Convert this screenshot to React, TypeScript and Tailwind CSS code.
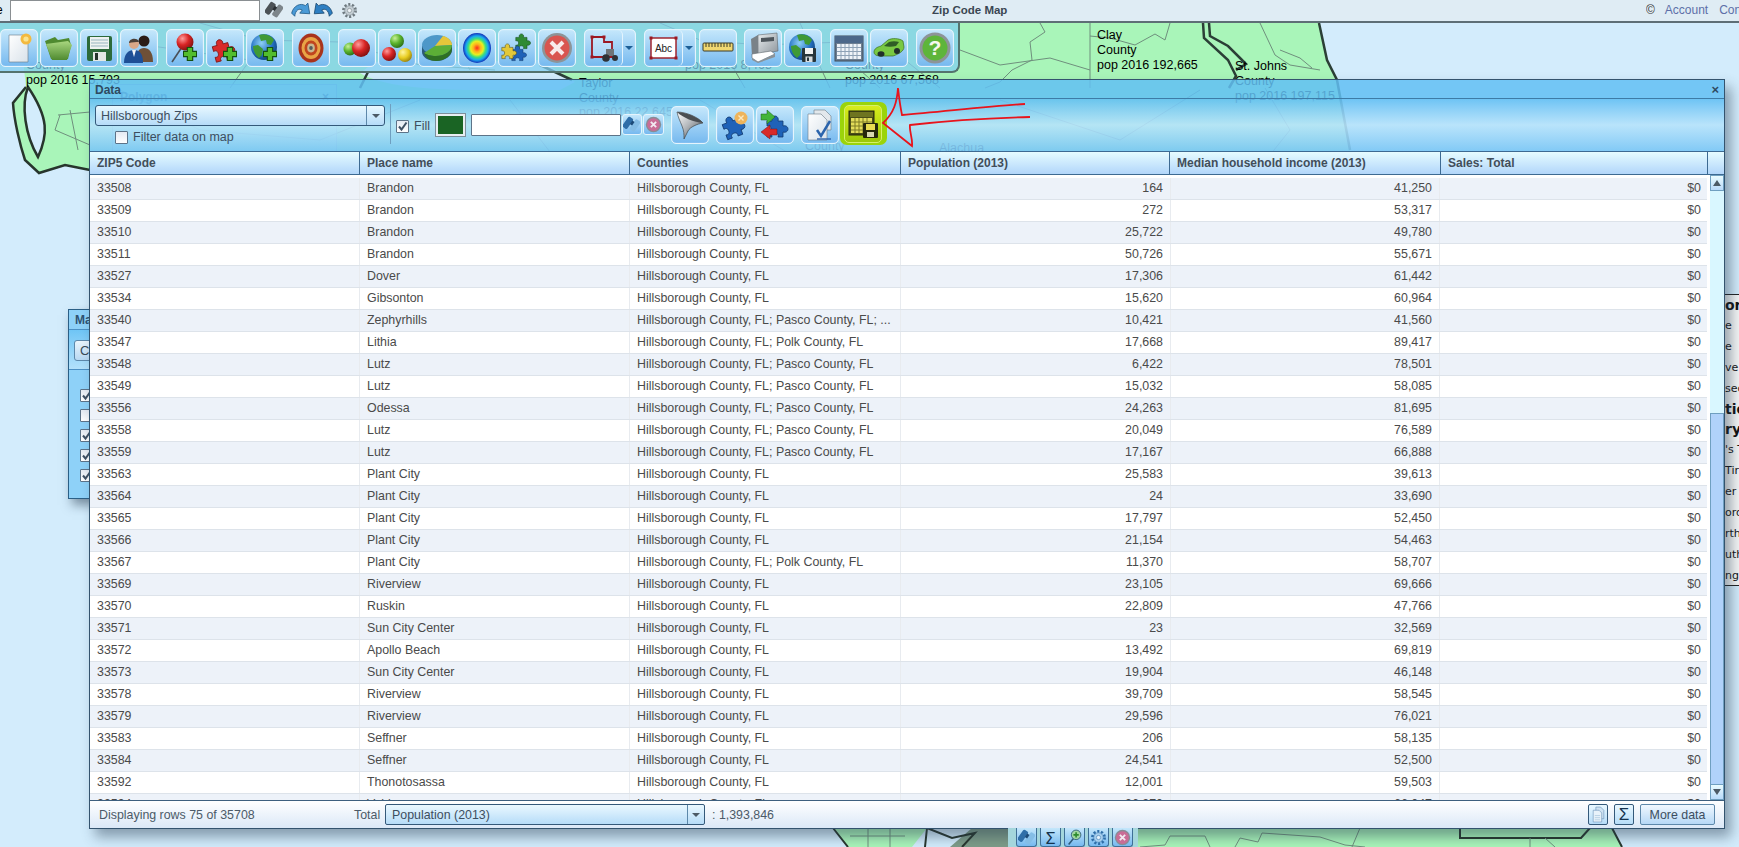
import type { ReactNode } from 'react'

type Row = [string, string, string, string, string]

const HC = 'Hillsborough County, FL'
const HCP = 'Hillsborough County, FL; Pasco County, FL'
const HCK = 'Hillsborough County, FL; Polk County, FL'

const rows: Row[] = [
  ['33508', 'Brandon', HC, '164', '41,250'],
  ['33509', 'Brandon', HC, '272', '53,317'],
  ['33510', 'Brandon', HC, '25,722', '49,780'],
  ['33511', 'Brandon', HC, '50,726', '55,671'],
  ['33527', 'Dover', HC, '17,306', '61,442'],
  ['33534', 'Gibsonton', HC, '15,620', '60,964'],
  ['33540', 'Zephyrhills', 'Hillsborough County, FL; Pasco County, FL; ...', '10,421', '41,560'],
  ['33547', 'Lithia', HCK, '17,668', '89,417'],
  ['33548', 'Lutz', HCP, '6,422', '78,501'],
  ['33549', 'Lutz', HCP, '15,032', '58,085'],
  ['33556', 'Odessa', HCP, '24,263', '81,695'],
  ['33558', 'Lutz', HCP, '20,049', '76,589'],
  ['33559', 'Lutz', HCP, '17,167', '66,888'],
  ['33563', 'Plant City', HC, '25,583', '39,613'],
  ['33564', 'Plant City', HC, '24', '33,690'],
  ['33565', 'Plant City', HC, '17,797', '52,450'],
  ['33566', 'Plant City', HC, '21,154', '54,463'],
  ['33567', 'Plant City', HCK, '11,370', '58,707'],
  ['33569', 'Riverview', HC, '23,105', '69,666'],
  ['33570', 'Ruskin', HC, '22,809', '47,766'],
  ['33571', 'Sun City Center', HC, '23', '32,569'],
  ['33572', 'Apollo Beach', HC, '13,492', '69,819'],
  ['33573', 'Sun City Center', HC, '19,904', '46,148'],
  ['33578', 'Riverview', HC, '39,709', '58,545'],
  ['33579', 'Riverview', HC, '29,596', '76,021'],
  ['33583', 'Seffner', HC, '206', '58,135'],
  ['33584', 'Seffner', HC, '24,541', '52,500'],
  ['33592', 'Thonotosassa', HC, '12,001', '59,503'],
  ['33594', 'Valrico', HC, '36,370', '66,047'],
]

const columns = ['ZIP5 Code', 'Place name', 'Counties', 'Population (2013)', 'Median household income (2013)', 'Sales: Total']
const colTemplate = 'grid grid-cols-[270px_270px_271px_270px_269px_268px]'
const headTemplate = 'grid grid-cols-[270px_270px_271px_269px_271px_267px]'

const sideLines: [string, boolean][] = [
  ['ore', true],
  ['e', false],
  ['e', false],
  ['ve', false],
  ['sec', false],
  ['tie', true],
  ['ry', true],
  ["'s T", false],
  ['Tir', false],
  ['er', false],
  ['ord', false],
  ['rth', false],
  ['uth', false],
  ['ng', false],
]

const puzzle =
  'M4 12h5c-1-3 1-5 3-5s4 2 3 5h5v5c3-1 5 1 5 3s-2 4-5 3v5h-5c1-3-1-4-3-4s-4 1-3 4H4v-5c3 1 4-1 4-3s-1-4-4-3z'

function Svg({ children, size = 32 }: { children: ReactNode; size?: number }) {
  return (
    <svg width={size} height={size} viewBox="0 0 32 32" className="block">
      {children}
    </svg>
  )
}

function Plus({ x = 21, y = 22 }: { x?: number; y?: number }) {
  return (
    <g>
      <path d={`M${x} ${y - 7}v14M${x - 7} ${y}h14`} stroke="#14500f" strokeWidth="6.5" />
      <path d={`M${x} ${y - 6}v12M${x - 6} ${y}h12`} stroke="#52bd2d" strokeWidth="4.2" />
    </g>
  )
}

function Floppy({ x, y, s = 1, fill = '#26343a' }: { x: number; y: number; s?: number; fill?: string }) {
  return (
    <g transform={`translate(${x} ${y}) scale(${s})`}>
      <rect width="14" height="14" rx="1" fill={fill} />
      <rect x="3" width="8" height="6" fill="#f2f2f2" />
      <rect x="3.5" y="8.5" width="7" height="5.5" fill="#d8dde0" />
      <rect x="5" y="9.5" width="2" height="3.5" fill="#26343a" />
    </g>
  )
}

function Defs() {
  return (
    <svg width="0" height="0" className="absolute">
      <defs>
        <radialGradient id="ballRed" cx="35%" cy="30%" r="75%">
          <stop offset="0" stopColor="#ff9c9c" />
          <stop offset="0.5" stopColor="#d92525" />
          <stop offset="1" stopColor="#7c0f0f" />
        </radialGradient>
        <radialGradient id="ballGreen" cx="35%" cy="30%" r="75%">
          <stop offset="0" stopColor="#c8f09a" />
          <stop offset="0.5" stopColor="#5cb52e" />
          <stop offset="1" stopColor="#2a6b16" />
        </radialGradient>
        <radialGradient id="ballYellow" cx="35%" cy="30%" r="75%">
          <stop offset="0" stopColor="#fff6a0" />
          <stop offset="0.55" stopColor="#e8cc20" />
          <stop offset="1" stopColor="#97800c" />
        </radialGradient>
        <radialGradient id="globe" cx="40%" cy="35%" r="70%">
          <stop offset="0" stopColor="#8ed0f5" />
          <stop offset="0.6" stopColor="#2472c4" />
          <stop offset="1" stopColor="#103e78" />
        </radialGradient>
        <radialGradient id="heat">
          <stop offset="0" stopColor="#ff2a1c" />
          <stop offset="0.25" stopColor="#ffb01c" />
          <stop offset="0.45" stopColor="#e8f020" />
          <stop offset="0.62" stopColor="#3fe07a" />
          <stop offset="0.8" stopColor="#18a8f0" />
          <stop offset="1" stopColor="#1230b8" />
        </radialGradient>
        <linearGradient id="folder" x1="0" y1="0" x2="0" y2="1">
          <stop offset="0" stopColor="#a9d77f" />
          <stop offset="1" stopColor="#4f8a30" />
        </linearGradient>
        <linearGradient id="funnel" x1="0" y1="0" x2="1" y2="1">
          <stop offset="0" stopColor="#ffffff" />
          <stop offset="0.45" stopColor="#b4b8bc" />
          <stop offset="1" stopColor="#3c4044" />
        </linearGradient>
        <linearGradient id="sheet" x1="0" y1="0" x2="1" y2="1">
          <stop offset="0" stopColor="#ffffff" />
          <stop offset="1" stopColor="#d9e2ea" />
        </linearGradient>
        <linearGradient id="printer" x1="0" y1="0" x2="1" y2="1">
          <stop offset="0" stopColor="#e8ecee" />
          <stop offset="1" stopColor="#8e969c" />
        </linearGradient>
      </defs>
    </svg>
  )
}

const Globe = () => (
  <g>
    <circle cx="15" cy="15" r="13" fill="url(#globe)" />
    <path d="M10 3c6-2 12 0 15 5l-3 5-4-1-1-4-5 1zM4 14l5-1 5 4-1 6-3 3c-4-3-6-8-6-12z" fill="#3f9a35" />
  </g>
)

const icons: Record<string, ReactNode> = {
  doc: (
    <Svg>
      <path d="M6 3h14l5 5v22H6z" fill="url(#sheet)" stroke="#6a7a86" strokeWidth=".6" />
      <circle cx="23" cy="7" r="5.5" fill="#f3b93f" />
      <circle cx="23" cy="7" r="2.6" fill="#fbe48e" />
    </Svg>
  ),
  folder: (
    <Svg>
      <path d="M2 9l10-4 3 3 11-2 2 7-3 14H8z" fill="#4f8a30" />
      <path d="M3 12l22-3 4 4-5 15H9z" fill="url(#folder)" />
    </Svg>
  ),
  save: (
    <Svg>
      <rect x="4" y="4" width="25" height="25" rx="2" fill="#2d6a3a" />
      <rect x="7" y="5" width="19" height="12" fill="#eef2f0" />
      <path d="M8 8h17M8 11h17M8 14h17" stroke="#98b5c0" />
      <rect x="10" y="20" width="13" height="9" fill="#e4e8e6" />
      <rect x="12" y="21" width="3" height="7" fill="#25332b" />
    </Svg>
  ),
  people: (
    <Svg>
      <circle cx="21" cy="9" r="5.5" fill="#2b1d18" />
      <path d="M13 30c0-10 3-14 8-14s9 4 9 14z" fill="#6e5038" />
      <circle cx="11" cy="12" r="5" fill="#d9a888" />
      <path d="M6 11c0-5 9-6 10-1-3 0-7 0-10 1z" fill="#4a4038" />
      <path d="M1 31c0-9 4-13 10-13s9 4 9 13z" fill="#1e4f96" />
      <path d="M9 18l2 7 2-7z" fill="#f0f4f8" />
    </Svg>
  ),
  pin: (
    <Svg>
      <path d="M13 15L3 30" stroke="#4a5058" strokeWidth="1.6" />
      <circle cx="16" cy="10" r="8.5" fill="url(#ballRed)" />
      <Plus />
    </Svg>
  ),
  puzzlePlus: (
    <Svg>
      <g transform="rotate(-15 14 16)">
        <path d={puzzle} fill="#d82a2a" stroke="#7c1212" strokeWidth=".8" />
      </g>
      <Plus />
    </Svg>
  ),
  globePlus: (
    <Svg>
      <Globe />
      <Plus />
    </Svg>
  ),
  target: (
    <Svg>
      <ellipse cx="16" cy="16" rx="12.5" ry="14.5" fill="#a8331c" />
      <ellipse cx="16" cy="16" rx="9.5" ry="11" fill="#e8a446" />
      <ellipse cx="16" cy="16" rx="6.5" ry="7.5" fill="#c0451e" />
      <ellipse cx="16" cy="16" rx="3.8" ry="4.4" fill="#c8b890" />
      <ellipse cx="16" cy="16" rx="1.8" ry="2" fill="#545b5e" />
    </Svg>
  ),
  bubbles: (
    <Svg>
      <circle cx="9" cy="17" r="6.5" fill="url(#ballGreen)" />
      <circle cx="20" cy="16" r="9" fill="url(#ballRed)" />
    </Svg>
  ),
  balls: (
    <Svg>
      <circle cx="16" cy="9" r="7" fill="url(#ballGreen)" />
      <circle cx="8" cy="22" r="7" fill="url(#ballRed)" />
      <circle cx="24" cy="23" r="7" fill="url(#ballYellow)" />
    </Svg>
  ),
  pie: (
    <Svg>
      <path d="M1 14v6c0 5 6 9 14 9 9 0 16-5 16-11v-4z" fill="#2b5a78" />
      <ellipse cx="16" cy="13" rx="15" ry="10" fill="#4d97c8" />
      <path d="M14 14L22 4c5 1 9 5 9 9z" fill="#e6c63a" />
      <path d="M14 14l17-1c0 6-7 11-16 11-6 0-9-1-12-3z" fill="#5cae36" />
      <path d="M3 21c3 2 6 3 12 3 9 0 16-5 16-11v4c0 6-7 12-16 12-6 0-10-3-12-8z" fill="#2e7024" />
    </Svg>
  ),
  heat: (
    <Svg>
      <ellipse cx="16" cy="16" rx="14" ry="15" fill="url(#heat)" />
    </Svg>
  ),
  puzzles: (
    <Svg>
      <g transform="translate(12 -3) scale(.7)">
        <path d={puzzle} fill="#2f8a34" stroke="#134a18" strokeWidth=".8" />
      </g>
      <g transform="translate(8 9) scale(.7)">
        <path d={puzzle} fill="#1f62b8" stroke="#123a70" strokeWidth=".8" />
      </g>
      <g transform="translate(-2 7) scale(.7)">
        <path d={puzzle} fill="#e2c83a" stroke="#5c5010" strokeWidth=".8" />
      </g>
    </Svg>
  ),
  close: (
    <Svg>
      <circle cx="16" cy="16" r="15" fill="#8d9498" />
      <circle cx="16" cy="16" r="12.5" fill="#d95550" />
      <path d="M10 10l12 12M22 10L10 22" stroke="#f8eaea" strokeWidth="4" />
    </Svg>
  ),
  polygon: (
    <Svg>
      <path d="M4 5h12v5h8v15H4z" fill="#fff" fillOpacity=".25" stroke="#9c1822" strokeWidth="1.8" />
      <g fill="#9c1822">
        <rect x="2.500" y="3.500" width="3" height="3" />
        <rect x="14.500" y="3.500" width="3" height="3" />
        <rect x="2.500" y="23.500" width="3" height="3" />
      </g>
      <rect x="18" y="17" width="8" height="7" fill="#6e7478" />
      <circle cx="18" cy="26" r="3.800" fill="#2e3236" />
      <circle cx="27" cy="26" r="3" fill="#2e3236" />
    </Svg>
  ),
  abc: (
    <svg width="32" height="32" viewBox="0 0 32 32" className="block">
      <rect x="3" y="6" width="25" height="20" fill="#fff" stroke="#9c1822" strokeWidth="1.4" />
      <g fill="#9c1822">
        <rect x="1.500" y="4.500" width="3" height="3" />
        <rect x="26.500" y="4.500" width="3" height="3" />
        <rect x="1.500" y="24.500" width="3" height="3" />
        <rect x="26.500" y="24.500" width="3" height="3" />
      </g>
      <text x="15.500" y="20" textAnchor="middle" fontSize="10" fill="#222" fontFamily="Liberation Sans, sans-serif">
        Abc
      </text>
    </svg>
  ),
  ruler: (
    <Svg>
      <rect x="1" y="11" width="30" height="8" rx="1" fill="#f1d871" stroke="#3b3a28" />
      <path d="M4 11v4M7 11v4M10 11v4M13 11v4M16 11v4M19 11v4M22 11v4M25 11v4M28 11v4" stroke="#3b3a28" />
    </Svg>
  ),
  printer: (
    <Svg>
      <path d="M11 3l19-2 1 18-20 3z" fill="url(#printer)" stroke="#5e666c" strokeWidth=".6" />
      <path d="M11 3L4 7l1 17 6-2z" fill="#7a8288" />
      <path d="M14 6l13-1v4l-13 1z" fill="#4e565c" />
      <path d="M5 22l19-3 4 3-17 8-6-4z" fill="#ffffff" stroke="#5e666c" strokeWidth=".6" />
      <path d="M5 26l6 4 17-8v3l-17 6-6-3z" fill="#8a9298" />
    </Svg>
  ),
  globeSave: (
    <Svg>
      <Globe />
      <Floppy x={15} y={16} />
    </Svg>
  ),
  calendar: (
    <Svg>
      <rect x="2" y="4" width="28" height="25" fill="#6d7f92" stroke="#3c4a58" />
      <rect x="2" y="4" width="28" height="7" fill="#4c688a" />
      <rect x="4" y="12" width="24" height="15" fill="#eef3f8" />
      <path d="M4 15.500h24M4 19.500h24M4 23.500h24M8 12v15M12 12v15M16 12v15M20 12v15M24 12v15" stroke="#8ea2b6" />
    </Svg>
  ),
  car: (
    <Svg>
      <path d="M1 20c0-3 3-5 7-6l7-6c4-2 11-2 15 1l1 6c0 4-5 7-11 9H8c-4 0-7-1-7-4z" fill="#79c943" stroke="#3a6f1f" strokeWidth=".7" />
      <path d="M11 14l5-4c3-1 7-1 10 0l-3 4c-4 1-8 1-12 0z" fill="#305e26" />
      <ellipse cx="8" cy="22" rx="3.500" ry="2.800" fill="#22302a" />
      <ellipse cx="24" cy="19" rx="3" ry="3" fill="#22302a" />
    </Svg>
  ),
  help: (
    <svg width="32" height="32" viewBox="0 0 32 32" className="block">
      <circle cx="16" cy="16" r="15.500" fill="#8d9498" />
      <circle cx="16" cy="16" r="12.500" fill="#5eb53a" />
      <text x="16" y="23" textAnchor="middle" fontSize="21" fontWeight="700" fill="#f4f8ee" fontFamily="Liberation Sans, sans-serif">
        ?
      </text>
    </svg>
  ),
  funnel: (
    <Svg>
      <path d="M3 3C12 3 24 8 29 14C23 15 16 18 14 22L10 30C10 25 10 22 8 17C6 12 4 8 3 3Z" fill="url(#funnel)" stroke="#33373b" strokeWidth=".6" />
      <path d="M3 3C12 3 24 8 29 14C20 13 9 9 3 3Z" fill="#4a4e52" />
    </Svg>
  ),
  puzzleOrange: (
    <Svg>
      <g transform="rotate(-20 14 16)">
        <path d={puzzle} fill="#1f62b8" stroke="#123a70" strokeWidth=".8" />
      </g>
      <circle cx="22" cy="9" r="6.500" fill="#eeb45c" />
      <path d="M19.500 6.500l5 5M24.500 6.500l-5 5" stroke="#fbe8c0" strokeWidth="1.400" />
    </Svg>
  ),
  puzzleArrows: (
    <Svg>
      <g transform="translate(4 0)">
        <path d={puzzle} fill="#1f62b8" stroke="#123a70" strokeWidth=".8" />
      </g>
      <path d="M2 5h6V1l8 7-8 7v-4H2z" fill="#43b53a" stroke="#1c5a1c" strokeWidth=".5" />
      <path d="M18 20h-7v-4l-9 7 9 7v-4h7z" fill="#d82a2a" stroke="#7c1212" strokeWidth=".5" />
    </Svg>
  ),
  docCheck: (
    <Svg>
      <path d="M10 1h11l6 6v14H10z" fill="#e3e8ec" stroke="#6a7a86" strokeWidth=".6" />
      <path d="M4 5h13l6 6v20H4z" fill="url(#sheet)" stroke="#6a7a86" strokeWidth=".6" />
      <path d="M13 21l4 6 9-15" fill="none" stroke="#2b64ac" strokeWidth="2.500" />
      <path d="M13 30h14" stroke="#2b64ac" strokeWidth="1.400" />
    </Svg>
  ),
  calendarSave: (
    <Svg>
      <rect x="2" y="3" width="25" height="24" fill="#4a4e18" stroke="#26280c" />
      <rect x="3" y="4" width="23" height="5" fill="#6e7420" />
      <rect x="4" y="10" width="21" height="15" fill="#e2dc5a" />
      <path d="M4 14h21M4 18h21M4 22h21M8 10v15M12 10v15M16 10v15M20 10v15" stroke="#7c7a24" />
      <rect x="16" y="15" width="15" height="15" rx="1" fill="#26280c" />
      <rect x="19" y="16" width="9" height="6" fill="#e8dc50" />
      <rect x="20" y="24" width="7" height="5" fill="#d8d8b0" />
    </Svg>
  ),
  binoculars: (
    <Svg>
      <g transform="rotate(35 16 16)">
        <rect x="3" y="6" width="11" height="23" rx="3" fill="#4c5256" />
        <rect x="17" y="2" width="11" height="23" rx="3" fill="#7d858a" />
        <rect x="13" y="9" width="5" height="8" fill="#2a2f33" />
      </g>
    </Svg>
  ),
  binocularsBlue: (
    <Svg>
      <g transform="rotate(35 16 16)">
        <rect x="3" y="6" width="11" height="23" rx="3" fill="#2f6ea8" />
        <rect x="17" y="2" width="11" height="23" rx="3" fill="#84bde6" />
        <rect x="13" y="9" width="5" height="8" fill="#1c4a78" />
      </g>
    </Svg>
  ),
  undo: (
    <Svg>
      <path d="M1 21C4 9 15 4 23 9L27 5L30 22L14 21L18 16C13 13 7 16 6 26Z" fill="#4a9ad6" stroke="#17527f" strokeWidth="1.200" />
    </Svg>
  ),
  redo: (
    <Svg>
      <path d="M31 21C28 9 17 4 9 9L5 5L2 22L18 21L14 16C19 13 25 16 26 26Z" fill="#2e7fc2" stroke="#123f66" strokeWidth="1.200" />
    </Svg>
  ),
  gear: (
    <Svg>
      <circle cx="16" cy="16" r="11.500" fill="none" stroke="#6f7a80" strokeWidth="5" strokeDasharray="4 3.200" />
      <circle cx="16" cy="16" r="9" fill="#c4ced4" stroke="#6f7a80" strokeWidth="1" />
      <circle cx="16" cy="16" r="4" fill="#eef2f5" stroke="#6f7a80" />
    </Svg>
  ),
  gearBlue: (
    <Svg>
      <circle cx="16" cy="16" r="11.500" fill="none" stroke="#2f6ea8" strokeWidth="5" strokeDasharray="4 3.200" />
      <circle cx="16" cy="16" r="9" fill="#a8d0ee" stroke="#2f6ea8" strokeWidth="1" />
      <circle cx="16" cy="16" r="4" fill="#e4f2fc" stroke="#2f6ea8" />
    </Svg>
  ),
  copyDoc: (
    <Svg>
      <path d="M11 2h9l6 6v16H11z" fill="#cfe2f2" stroke="#5a86b0" />
      <path d="M6 8h11l5 5v17H6z" fill="#e8f2fa" stroke="#5a86b0" />
      <path d="M9 18h10M9 22h10M9 26h10" stroke="#8fb3d0" />
    </Svg>
  ),
  xSmall: (
    <Svg>
      <circle cx="16" cy="16" r="14.500" fill="#878e96" />
      <circle cx="16" cy="16" r="12" fill="#c96d96" />
      <path d="M11 11l10 10M21 11L11 21" stroke="#f2eaf0" strokeWidth="3.500" />
    </Svg>
  ),
  search: (
    <Svg>
      <path d="M14 18L5 29" stroke="#2e5a78" strokeWidth="3" />
      <circle cx="19" cy="11" r="9" fill="#9fd6a0" stroke="#2e5a78" strokeWidth="1.600" />
      <path d="M19 6v10M14 11h10" stroke="#2c8a2c" strokeWidth="3" />
    </Svg>
  ),
}

const btnSkin =
  'border border-[#e4f4fd] bg-linear-to-b from-[#c4e7fb] to-[#76b9ef] shadow-[inset_0_0_1px_#fff]'

function ToolButton({ icon, className = '' }: { icon: string; className?: string }) {
  return (
    <div className={`flex h-[38px] w-[38px] shrink-0 items-center justify-center rounded-[5px] ${btnSkin} ${className}`}>
      {icons[icon]}
    </div>
  )
}

function SplitButton({ icon, className = '' }: { icon: string; className?: string }) {
  return (
    <div className={`flex h-[38px] w-[52px] shrink-0 rounded-[5px] ${btnSkin} ${className}`}>
      <div className="flex w-[38px] items-center justify-center rounded-[5px] border-r border-[#e4f4fd]">{icons[icon]}</div>
      <div className="flex flex-1 items-center justify-center">
        <div className="h-0 w-0 border-x-[4px] border-t-[4px] border-x-transparent border-t-[#1d5f96]" />
      </div>
    </div>
  )
}

function SmallIcon({ icon, size = 20 }: { icon: string; size?: number }) {
  return (
    <div className="shrink-0" style={{ width: size, height: size }}>
      <svg width={size} height={size} viewBox="0 0 32 32" className="block">
        <svg width="32" height="32" viewBox="0 0 32 32">
          {icons[icon]}
        </svg>
      </svg>
    </div>
  )
}

function Check({ checked }: { checked: boolean }) {
  return (
    <div className="flex h-[13px] w-[13px] shrink-0 items-center justify-center rounded-[1px] border border-[#5d7388] bg-linear-to-b from-[#e4eaf2] to-white">
      {checked && (
        <svg width="11" height="11" viewBox="0 0 11 11">
          <path d="M2 5.500l2.500 3L9.500 1.500" fill="none" stroke="#3f5164" strokeWidth="2" />
        </svg>
      )}
    </div>
  )
}

function MapBackground() {
  return (
    <svg width="1739" height="847" viewBox="0 0 1739 847" className="absolute left-0 top-0">
      <path
        d="M0 23H1319L1327 60L1337 80L1350 150L1350 170H90L65 165L39 173L25 160C20 145 14 120 13 103L26 87L23 60L0 50Z"
        fill="#a9f5b9"
      />
      <path d="M360 73C380 85 420 90 480 90H560L575 82L540 60L470 62L410 58L375 62Z" fill="#d3ecfc" />
      <path d="M360 88L368 72M540 65L572 80" fill="none" stroke="#2b3f36" strokeWidth="2.500" />
      <path d="M26 87L13 103C14 120 20 145 25 160L39 173L65 165L90 170" fill="none" stroke="#27352c" strokeWidth="2.500" />
      <path d="M28 87C21 105 25 135 38 157C48 135 49 118 28 87Z" fill="#d3ecfc" stroke="#27352c" strokeWidth="2.500" />
      <path d="M1319 23L1327 60L1337 80L1350 150" fill="none" stroke="#2b3f36" strokeWidth="2.500" />
      <path d="M1203 23L1204 38L1228 60L1236 76L1229 88" fill="none" stroke="#2b3f36" strokeWidth="2.500" />
      <path d="M1209 23L1210 36L1228 46L1240 58L1246 64L1236 70" fill="none" stroke="#2b3f36" strokeWidth="2.500" />
      <g fill="none" stroke="#6f8f7d" strokeWidth="1">
        <path d="M1040 23L1045 32L1030 42L1032 60L1012 70L1000 82L985 88" />
        <path d="M1090 23V88M1090 36L1110 38L1135 45L1155 34L1165 40L1170 23" />
        <path d="M1260 23L1275 55L1290 65L1320 70M1280 50L1300 58L1312 68" />
        <path d="M1265 88L1290 130L1258 170" />
        <path d="M660 23L700 40L760 45L845 42M720 45L745 88M800 23L830 88" />
        <path d="M200 23L260 40L340 42L420 65L495 70M110 40L250 60L230 88M450 30L470 70" />
        <path d="M960 50L1000 65L1050 58L1090 70M905 60L940 88M860 70L880 88" />
        <path d="M58 115L90 112M60 115L55 130L90 145M70 110L78 150" />
        <path d="M120 90L200 130L320 140L420 100M510 100L560 165M700 100L800 160M1000 100L1120 140L1200 90" />
      </g>

      <path d="M833 828L848 847H912L927 828Z" fill="#a9f5b9" />
      <path d="M972 828L950 847H1008V828Z" fill="#7d9c88" />
      <path d="M1008 828H1612L1622 847H1008Z" fill="#a9f5b9" />
      <path d="M833 828L848 847M927 828L925 847M927 828L952 838L975 833L962 847M1612 828L1622 847M1460 828V838H1581L1590 828" fill="none" stroke="#27352c" strokeWidth="2" />
      <g fill="none" stroke="#6f8f7d" strokeWidth="1">
        <path d="M850 836H905M868 828V847M890 828V847M1140 847L1165 845L1170 836H1205L1210 847M1235 847L1240 838L1258 842L1262 833L1320 837L1345 845L1365 847M1360 828L1352 847M1530 838V847M1545 838L1555 847" />
      </g>
      <g className="font-['Liberation_Sans',sans-serif]" fontSize="12.500" fill="#000">
        <text x="1097" y="39">Clay</text>
        <text x="1097" y="54">County</text>
        <text x="1097" y="69">pop 2016 192,665</text>
        <text x="1235" y="70">St. Johns</text>
        <text x="1235" y="85">County</text>
        <text x="1235" y="100">pop 2016 197,115</text>
        <text x="26" y="84">pop 2016 15,793</text>
        <text x="26" y="69">County</text>
        <text x="579" y="87">Taylor</text>
        <text x="579" y="102">County</text>
        <text x="579" y="116">pop 2016 22,645</text>
        <text x="845" y="84">pop 2016 67,568</text>
        <text x="845" y="69">County</text>
        <text x="685" y="69">pop 2016 8,468</text>
        <text x="805" y="150">County</text>
        <text x="939" y="152">Alachua</text>
      </g>
    </svg>
  )
}

function TopBar() {
  return (
    <div className="relative flex h-[23px] items-center border-b-2 border-[#5e6e76] bg-[#dfecf4] pb-px font-['Liberation_Sans',sans-serif] text-[12px]">
      <div className="h-[21px] w-[10px] shrink-0 overflow-hidden leading-[21px] text-black">
        <span className="-ml-[4px] block">e</span>
      </div>
      <div className="h-[21px] w-[250px] shrink-0 bg-white shadow-[inset_0_0_0_1px_#8a8f92]" />
      <div className="ml-[5px] flex items-center">
        <SmallIcon icon="binoculars" size={18} />
        <div className="ml-[8px]">
          <SmallIcon icon="undo" size={20} />
        </div>
        <div className="ml-[2px]">
          <SmallIcon icon="redo" size={20} />
        </div>
        <div className="ml-[8px]">
          <SmallIcon icon="gear" size={17} />
        </div>
      </div>
      <div className="ml-[574px] pt-px text-[11.500px] font-bold text-[#3a4652]">Zip Code Map</div>
      <div className="ml-auto flex w-[93px] shrink-0 gap-[7px] overflow-hidden whitespace-nowrap text-[#5d6fa8]">
        <span className="text-[#333]">©</span>
        <span className="ml-[3px]">Account</span>
        <span className="ml-[4px]">Contact</span>
      </div>
    </div>
  )
}

function MainToolbar() {
  return (
    <div className="absolute left-0 top-[23px] flex h-[50px] w-[960px] items-start rounded-br-[8px] border-b-2 border-r-2 border-[#54736e] bg-[#82cdf0]/75 pt-[6px]">
      <div className="flex gap-[2px]">
        <ToolButton icon="doc" />
        <ToolButton icon="folder" />
        <ToolButton icon="save" />
        <ToolButton icon="people" />
      </div>
      <div className="ml-[8px] flex gap-[2px]">
        <ToolButton icon="pin" />
        <ToolButton icon="puzzlePlus" />
        <ToolButton icon="globePlus" />
      </div>
      <ToolButton icon="target" className="ml-[8px]" />
      <div className="ml-[8px] flex gap-[2px]">
        <ToolButton icon="bubbles" />
        <ToolButton icon="balls" />
        <ToolButton icon="pie" />
        <ToolButton icon="heat" />
        <ToolButton icon="puzzles" />
        <ToolButton icon="close" />
      </div>
      <SplitButton icon="polygon" className="ml-[8px]" />
      <SplitButton icon="abc" className="ml-[8px]" />
      <ToolButton icon="ruler" className="ml-[3px]" />
      <div className="ml-[7px] flex gap-[2px]">
        <ToolButton icon="printer" />
        <ToolButton icon="globeSave" />
      </div>
      <div className="ml-[8px] flex gap-[2px]">
        <ToolButton icon="calendar" />
        <ToolButton icon="car" />
      </div>
      <ToolButton icon="help" className="ml-[8px]" />
    </div>
  )
}

function BehindWindows() {
  return (
    <>
      {/* polygon window seen through the data window header */}
      <div className="absolute left-[112px] top-[84px] flex h-[90px] w-[225px] justify-between border border-[#7fa4b8]/60 bg-[#c4e6f7]/40 px-[7px] pt-[3px] font-['Liberation_Sans',sans-serif] text-[12px] font-bold text-[#4a6e86]">
        <span>Polygon</span>
        <span>×</span>
      </div>

      <div className="absolute left-[68px] top-[309px] flex h-[190px] w-[60px] flex-col border border-[#2b5f86] bg-[#8ed1f8] pl-[6px] font-['Liberation_Sans',sans-serif] text-[12px] shadow-[4px_6px_10px_rgba(30,50,70,.5)]">
        <div className="flex h-[19px] items-center font-bold text-[#2f5272]">Ma</div>
        <div className="-ml-[6px] h-[41px] border-b border-t border-[#4b90c4] bg-linear-to-b from-[#6fc5f5] to-[#b2e1fb] pl-[5px] pt-[10px]">
          <div className="flex h-[21px] items-center rounded-[3px] border border-[#5d88aa] bg-linear-to-b from-[#eaf5fc] to-[#b8d8f2] pl-[5px] text-[13px] text-[#3a4a58]">
            C
          </div>
        </div>
        <div className="ml-[5px] mt-[19px] flex flex-col gap-[7px]">
          <Check checked />
          <Check checked={false} />
          <Check checked />
          <Check checked />
          <Check checked />
        </div>
      </div>

      <div className="absolute left-[1700px] top-[294px] flex h-[292px] w-[39px] flex-col overflow-hidden border-y border-[#222] bg-[#f4f6f6] pl-[25px] font-['DejaVu_Sans',sans-serif] text-[11px] whitespace-nowrap text-[#111]">
        {sideLines.map(([text, bold], i) => (
          <div key={i} className={bold ? 'h-[20px] text-[14px] font-bold leading-[20px]' : 'h-[21px] leading-[21px]'}>
            {text}
          </div>
        ))}
      </div>
    </>
  )
}

function DataWindow() {
  return (
    <div className="absolute left-[89px] top-[79px] flex h-[750px] w-[1636px] flex-col border border-[#33536e] font-['Liberation_Sans',sans-serif] text-[12.400px] text-[#4a4a4a] shadow-[6px_8px_12px_rgba(40,60,80,.45)]">
      <div className="flex h-[19px] shrink-0 items-center justify-between border-b border-[#3d7ba6] bg-[#62c0f3]/85 pl-[5px] pr-[5px] pt-px text-[12px]">
        <span className="font-bold text-[#2f4a60]">Data</span>
        <span className="text-[13px] font-bold leading-none text-[#2f4a60]">×</span>
      </div>

      <div className="flex h-[52px] shrink-0 bg-linear-to-b from-[#62bff3]/90 via-[#b6e3fb]/90 to-[#79c6f5]/90">
        <div className="ml-[5px] mt-[6px] w-[290px] shrink-0">
          <div className="flex h-[21px] items-stretch rounded-[3px] border border-[#34597a] bg-linear-to-b from-[#e8f8ff] to-[#b6dcf8]">
            <div className="flex flex-1 items-center pl-[5px] pt-px text-[12.500px] text-[#3d4e5f]">Hillsborough Zips</div>
            <div className="flex w-[18px] items-center justify-center border-l border-[#5d88aa]">
              <div className="h-0 w-0 border-x-[4px] border-t-[4px] border-x-transparent border-t-[#4c5a66]" />
            </div>
          </div>
          <div className="ml-[20px] mt-[2px] flex items-center gap-[5px] text-[12.500px] text-[#3d4e5f]">
            <Check checked={false} />
            <span>Filter data on map</span>
          </div>
        </div>
        <div className="ml-[5px] mt-[5px] h-[40px] w-px bg-[#6f9fc0]" />
        <div className="ml-[5px] mt-[19px] flex h-[16px] items-center">
          <Check checked />
        </div>
        <span className="ml-[5px] mt-[20px] text-[12.500px] leading-[14px] text-[#3d4e5f]">Fill</span>
        <div className="ml-[6px] mt-[15px] h-[22px] w-[29px] border-2 border-[#e8eef2] bg-[#1a6424] shadow-[0_0_0_1px_#7d8f9c]" />
        <div className="ml-[6px] mt-[15px] h-[22px] w-[150px] rounded-[1px] border border-[#5d7388] bg-white" />
        <div className="ml-[1px] mt-[15px] flex h-[21px] w-[20px] items-center justify-center rounded-[3px] border border-[#e4f4fd] bg-linear-to-b from-[#c4e7fb] to-[#76b9ef]">
          <SmallIcon icon="binocularsBlue" size={17} />
        </div>
        <div className="ml-[1px] mt-[15px] flex h-[21px] w-[21px] items-center justify-center rounded-[3px] border border-[#e4f4fd] bg-linear-to-b from-[#c4e7fb] to-[#76b9ef]">
          <SmallIcon icon="xSmall" size={17} />
        </div>
        <ToolButton icon="funnel" className="ml-[7px] mt-[7px]" />
        <ToolButton icon="puzzleOrange" className="ml-[7px] mt-[7px]" />
        <ToolButton icon="puzzleArrows" className="ml-[2px] mt-[7px]" />
        <ToolButton icon="docCheck" className="ml-[7px] mt-[7px]" />
        <div className="ml-[1px] mt-[3px] flex h-[43px] w-[47px] shrink-0 items-center justify-center rounded-[7px] bg-[#9bd40a]">
          <div className="flex h-[38px] w-[38px] items-center justify-center rounded-[5px] border border-[#d6f06a] bg-linear-to-b from-[#d8ec1c] to-[#9cc808]">
            {icons.calendarSave}
          </div>
        </div>
      </div>

      <div className="flex h-[24px] shrink-0 border-y border-[#3d6a92] bg-linear-to-b from-[#e6fcff] to-[#b2d6fa] text-[12px]">
        <div className={headTemplate}>
          {columns.map((name) => (
            <div key={name} className="flex items-center border-r border-[#3d6a92] pl-[7px] font-bold text-[#424e5a]">
              {name}
            </div>
          ))}
        </div>
      </div>

      <div className="flex min-h-0 flex-1 overflow-hidden bg-white">
        <div className="min-w-0 flex-1 overflow-hidden pt-[3px]">
          {rows.map((row, i) => (
            <div key={row[0]} className={`${colTemplate} h-[22px] border-b border-[#dde3ea] ${i % 2 === 0 ? 'bg-[#edf2f9]' : 'bg-white'}`}>
              <div className="flex items-center border-r border-[#e8ebef] pl-[7px]">{row[0]}</div>
              <div className="flex items-center border-r border-[#e8ebef] pl-[7px]">{row[1]}</div>
              <div className="flex items-center overflow-hidden whitespace-nowrap border-r border-[#e8ebef] pl-[7px]">{row[2]}</div>
              <div className="flex items-center justify-end border-r border-[#e8ebef] pr-[7px]">{row[3]}</div>
              <div className="flex items-center justify-end border-r border-[#e8ebef] pr-[7px]">{row[4]}</div>
              <div className="flex items-center justify-end pr-[7px]">$0</div>
            </div>
          ))}
        </div>
        <div className="flex w-[17px] shrink-0 flex-col border-l-[3px] border-white">
          <div className="flex h-[16px] items-center justify-center border border-[#6f9fc0] bg-linear-to-b from-[#eafcff] to-[#b9dafa]">
            <div className="h-0 w-0 border-x-[4px] border-b-[6px] border-x-transparent border-b-[#4c5a66]" />
          </div>
          <div className="h-[222px] bg-[#d9f7ff]" />
          <div className="flex-1 border-x border-t border-[#6f9fc0] bg-[#b0d2fa]" />
          <div className="flex h-[16px] items-center justify-center border border-[#6f9fc0] bg-linear-to-b from-[#eafcff] to-[#b9dafa]">
            <div className="h-0 w-0 border-x-[4px] border-t-[6px] border-x-transparent border-t-[#4c5a66]" />
          </div>
        </div>
      </div>

      <div className="flex h-[28px] shrink-0 items-center border-t border-[#3d5f7e] bg-linear-to-b from-white to-[#dbe8f7] pl-[9px] pr-[9px] text-[12.400px] text-[#4c5a68]">
        <span className="w-[255px] shrink-0 pt-px">Displaying rows 75 of 35708</span>
        <span className="w-[31px] shrink-0 pt-px">Total</span>
        <div className="flex h-[21px] w-[320px] shrink-0 items-stretch rounded-[2px] border border-[#34597a] bg-linear-to-b from-[#eaf8ff] to-[#b6dcf8]">
          <div className="flex flex-1 items-center pl-[6px] pt-px text-[#3d4e5f]">Population (2013)</div>
          <div className="flex w-[17px] items-center justify-center border-l border-[#5d88aa]">
            <div className="h-0 w-0 border-x-[4px] border-t-[4px] border-x-transparent border-t-[#4c5a66]" />
          </div>
        </div>
        <span className="ml-[7px] pt-px">: 1,393,846</span>
        <div className="ml-auto flex items-center gap-[6px]">
          <div className="flex h-[21px] w-[20px] items-center justify-center rounded-[2px] border border-[#34597a] bg-linear-to-b from-[#eaf8ff] to-[#b6dcf8]">
            <SmallIcon icon="copyDoc" size={17} />
          </div>
          <div className="flex h-[21px] w-[20px] items-center justify-center rounded-[2px] border border-[#34597a] bg-linear-to-b from-[#eaf8ff] to-[#b6dcf8] text-[17px] leading-none text-[#14324e]">
            Σ
          </div>
          <div className="flex h-[21px] w-[75px] items-center justify-center rounded-[2px] border border-[#5d88aa] bg-linear-to-b from-[#f0f8ff] to-[#b6d8f6] pt-px text-[#3d4e5f]">
            More data
          </div>
        </div>
      </div>
    </div>
  )
}

function MiniToolbar() {
  return (
    <div className="absolute left-[1008px] top-[828px] flex h-[19px] w-[130px] items-start gap-[3px] bg-[#a4d6dc] pl-[8px]">
      {['binocularsBlue', 'sigma', 'search', 'gearBlue', 'xSmall'].map((name) => (
        <div key={name} className="flex h-[19px] w-[21px] items-center justify-center rounded-b-[3px] border border-t-0 border-[#3f6f96] bg-linear-to-b from-[#c4e7fb] to-[#76b9ef] text-[17px] leading-none text-[#14324e]">
          {name === 'sigma' ? 'Σ' : <SmallIcon icon={name} size={17} />}
        </div>
      ))}
    </div>
  )
}

function RedArrow() {
  return (
    <svg width="160" height="70" viewBox="880 85 160 70" className="absolute left-[880px] top-[85px]">
      <path
        d="M1025 104C990 106 940 112 902 115C900 105 899 97 898 88C897 102 894 113 883 123L912 146C913 139 909 131 910 125C945 121 990 118 1030 117"
        fill="none"
        stroke="#e8141c"
        strokeWidth="1.800"
      />
    </svg>
  )
}

export default function App() {
  return (
    <div className="relative h-[847px] w-[1739px] overflow-hidden bg-[#d3ecfc]">
      <Defs />
      <MapBackground />
      <BehindWindows />
      <TopBar />
      <MainToolbar />
      <DataWindow />
      <MiniToolbar />
      <RedArrow />
    </div>
  )
}
